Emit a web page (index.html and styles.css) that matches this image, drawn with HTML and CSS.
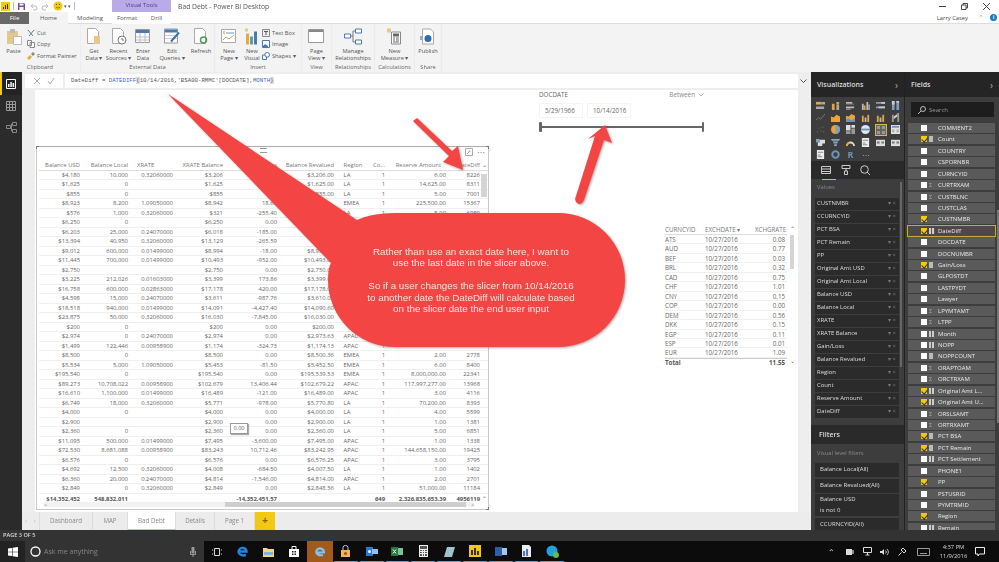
FILE: index.html
```html
<!DOCTYPE html>
<html lang="en">
<head>
<meta charset="utf-8">
<title>Bad Debt - Power BI Desktop</title>
<link rel="stylesheet" href="styles.css">
</head>
<body>
<svg class="defs" width="0" height="0" aria-hidden="true">
  <symbol id="v-sbar" viewBox="0 0 10 10"><path fill="#e8a33d" d="M0 1h6v3H0z"/><path fill="#aaa" d="M6 1h4v3H6zM0 6h9v3H0z"/></symbol>
  <symbol id="v-scol" viewBox="0 0 10 10"><path fill="#e8a33d" d="M1 3h3v7H1zM6 1h3v3H6z"/><path fill="#aaa" d="M6 4h3v6H6z"/></symbol>
  <symbol id="v-cbar" viewBox="0 0 10 10"><path fill="#bbb" d="M0 1h7v2H0zM0 6h9v2H0z"/><path fill="#888" d="M0 3h9v1H0zM0 8h5v2H0z"/></symbol>
  <symbol id="v-ccol" viewBox="0 0 10 10"><path fill="#bbb" d="M1 3h2v7H1zM6 1h2v9H6z"/><path fill="#e8a33d" d="M3 5h2v5H3z"/><path fill="#999" d="M8 4h2v6H8z"/></symbol>
  <symbol id="v-pbar" viewBox="0 0 10 10"><path fill="#7f9fbf" d="M0 1h10v2H0zM0 6h10v2H0z"/><path fill="#ccc" d="M6 1h4v2H6zM3 6h7v2H3z"/></symbol>
  <symbol id="v-pcol" viewBox="0 0 10 10"><path fill="#7f9fbf" d="M1 0h3v10H1zM6 0h3v10H6z"/><path fill="#ccc" d="M1 0h3v4H1zM6 0h3v2H6z"/></symbol>
  <symbol id="v-line" viewBox="0 0 10 10"><path fill="none" stroke="#888" stroke-width=".8" d="M0 8l3-3 2 2 5-6"/></symbol>
  <symbol id="v-area" viewBox="0 0 10 10"><path fill="#e8a33d" d="M0 4l3 1 3-3 4 2v6H0z"/></symbol>
  <symbol id="v-sarea" viewBox="0 0 10 10"><path fill="#e8a33d" d="M0 3l3 1 3-3 4 2v7H0z"/><path fill="#6c93bd" d="M0 7l3-1 3 2 4-2v4H0z"/></symbol>
  <symbol id="v-lcol" viewBox="0 0 10 10"><path fill="#e8a33d" d="M1 3h2v7H1z"/><path fill="#bbb" d="M4 5h2v5H4z"/><path fill="#e8a33d" d="M7 2h2v8H7z"/></symbol>
  <symbol id="v-rib" viewBox="0 0 10 10"><path fill="#999" d="M1 2h2v8H1zM7 0h2v10H7z"/><path fill="#ccc" d="M3 4l4-3v3L3 7z"/></symbol>
  <symbol id="v-scat" viewBox="0 0 10 10"><path fill="#777" d="M1 7h1v1H1zM3 3h1v1H3zM5 6h1v1H5zM7 2h1v1H7zM8 7h1v1H8z"/></symbol>
  <symbol id="v-pie" viewBox="0 0 10 10"><circle cx="5" cy="5" r="5" fill="#e8a33d"/><path fill="#7f9fbf" d="M5 5V0a5 5 0 0 1 0 10z"/></symbol>
  <symbol id="v-tree" viewBox="0 0 10 10"><path fill="#ddd" d="M0 0h5v6H0zM6 0h4v3H6z"/><path fill="#999" d="M6 4h4v6H6zM0 7h5v3H0z"/></symbol>
  <symbol id="v-globe" viewBox="0 0 10 10"><circle cx="5" cy="5" r="5" fill="#dfe6ee"/><path fill="#6c93bd" d="M0 4h10v2H0z"/></symbol>
  <symbol id="v-tab" viewBox="0 0 10 10"><path fill="#666" d="M0 0h10v10H0z"/><path fill="#999" d="M1 1h3v3H1zM6 1h3v3H6zM1 6h3v3H1zM6 6h3v3H6z"/></symbol>
  <symbol id="v-mat" viewBox="0 0 10 10"><path fill="#e4e4e4" d="M0 0h10v10H0z"/><path fill="#6c93bd" d="M1 1h8v2H1z"/><path fill="#999" d="M1 5h3v1H1zM6 5h3v1H6zM1 7h3v1H1zM6 7h3v1H6z"/></symbol>
  <symbol id="v-map" viewBox="0 0 10 10"><path fill="#7f9fbf" d="M0 1h4v4H0z"/><path fill="#ddd" d="M4 2h6v4H4zM2 5h5v4H2z"/></symbol>
  <symbol id="v-fun" viewBox="0 0 10 10"><path fill="#8ca7c4" d="M0 1h10L9 3H1zM2 4h6L7 6H3zM3.500 7h3v2h-3z"/></symbol>
  <symbol id="v-gau" viewBox="0 0 10 10"><path fill="none" stroke="#ddd" stroke-width="2" d="M1 9a4 4 0 0 1 8 0"/><path fill="none" stroke="#e8a33d" stroke-width="2" d="M1 9a4 4 0 0 1 3-4"/></symbol>
  <symbol id="v-card" viewBox="0 0 10 10"><path fill="#eee" d="M1 0h8v10H1z"/><path fill="#888" d="M2 2h6v1H2zM2 5h3v1H2zM2 7h5v1H2z"/></symbol>
  <symbol id="v-kpi" viewBox="0 0 10 10"><path fill="#ddd" d="M0 2h10v7H0z"/><path fill="#777" d="M1 4h3v2H1zM6 4h3v2H6z"/></symbol>
  <symbol id="v-ring" viewBox="0 0 10 10"><circle cx="5" cy="5" r="3.600" fill="none" stroke="#6c93bd" stroke-width="2.200"/></symbol>
</svg>

<div class="app">
  <header class="titlebar">
    <div class="quick">
      <svg class="logo" width="9" height="9" viewBox="0 0 9 9"><path fill="#f2c811" d="M0 0h9v9H0z"/><path fill="#333" d="M2 5h1v2H2zM4 3h1v4H4zM6 2h1v5H6z"/></svg>
      <i class="bar"></i>
      <svg width="9" height="9" viewBox="0 0 9 9"><path fill="#7a4b9c" d="M1 1h6l1 1v6H1z"/><path fill="#fff" d="M2.500 1.500h4v2h-4zM2.500 5h4v3h-4z"/></svg>
      <svg width="9" height="9" viewBox="0 0 9 9"><path fill="none" stroke="#bbb" d="M2 4h4a2 2 0 0 1 0 4H4M4 2L2 4l2 2"/></svg>
      <svg width="9" height="9" viewBox="0 0 9 9"><path fill="none" stroke="#bbb" d="M7 4H3a2 2 0 0 0 0 4h2M5 2l2 2-2 2"/></svg>
      <svg width="10" height="10" viewBox="0 0 10 10"><circle cx="5" cy="5" r="4.500" fill="#f2c811"/><path fill="#555" d="M3 3h1v1H3zM6 3h1v1H6z"/><path fill="none" stroke="#555" stroke-width=".7" d="M3 6c1 1.300 3 1.300 4 0"/></svg>
      <span class="caret">&#9662;</span>
      <span class="caret">&#9662;</span>
      <i class="bar"></i>
    </div>
    <div class="context">Visual Tools</div>
    <div class="doc-title">Bad Debt - Power BI Desktop</div>
    <div class="winctl">
      <svg width="7" height="7" viewBox="0 0 7 7"><path stroke="#444" d="M0 3.500h7"/></svg>
      <svg width="7" height="7" viewBox="0 0 7 7"><path fill="none" stroke="#444" d="M.5 2h4.500v4.500H.5zM2 2V.5h4.500V5H5"/></svg>
      <svg width="7" height="7" viewBox="0 0 7 7"><path stroke="#444" d="M0 0l7 7M7 0L0 7"/></svg>
    </div>
  </header>

  <nav class="menubar">
    <span class="tab file">File</span>
    <span class="tab home">Home</span>
    <span class="tab modeling">Modeling</span>
    <span class="tab ctx format">Format</span>
    <span class="tab ctx drill">Drill</span>
    <span class="user">Larry Casey</span>
    <span class="up">&#8963;</span>
    <span class="info">i</span>
  </nav>

  <section class="ribbon">
    <div class="group g-clip">
      <div class="tools">
        <div class="tool w-paste">
          <svg width="16" height="17" viewBox="0 0 16 17"><path fill="#e7c88a" d="M1 3h11v13H1z"/><path fill="#bbb" d="M4 1h5v4H4z"/><path fill="#fff" stroke="#bbb" d="M7.500 8.500h8v8h-8z"/></svg>
          <span>Paste</span>
        </div>
        <div class="stack">
          <div class="mini"><svg width="8" height="8" viewBox="0 0 8 8"><path fill="none" stroke="#5a7fa8" d="M1 1l5 6M7 1L2 7"/></svg><span>Cut</span></div>
          <div class="mini"><svg width="8" height="8" viewBox="0 0 8 8"><path fill="#fff" stroke="#888" d="M.5.500h4v5h-4zM3 2.500h4.500v5H3z"/></svg><span>Copy</span></div>
          <div class="mini"><svg width="8" height="8" viewBox="0 0 8 8"><path fill="#e7a93d" d="M0 6l3-3 2 2-3 3z"/><path fill="#888" d="M4 2l2-2 2 2-2 2z"/></svg><span>Format Painter</span></div>
        </div>
      </div>
      <div class="glabel">Clipboard</div>
    </div>

    <div class="group g-ext">
      <div class="tools">
        <div class="tool w-get">
          <svg width="16" height="17" viewBox="0 0 16 17"><path fill="#fff" stroke="#aaa" d="M1.500.500h8l3 3v12h-11z"/><path fill="#e7c88a" d="M8 8h6v8H8z"/></svg>
          <span>Get</span><span>Data &#9662;</span>
        </div>
        <div class="tool w-rec">
          <svg width="16" height="17" viewBox="0 0 16 17"><path fill="#fff" stroke="#aaa" d="M1.500.500h8l3 3v12h-11z"/><circle cx="11" cy="12" r="4" fill="#fff" stroke="#777"/><path stroke="#777" fill="none" d="M11 10v2h2"/></svg>
          <span>Recent</span><span>Sources &#9662;</span>
        </div>
        <div class="tool w-ent">
          <svg width="16" height="15" viewBox="0 0 16 15"><path fill="#fff" stroke="#999" d="M.5.500h14v13H.5z"/><path fill="#4a78b0" d="M1 1h13v3H1z"/><path stroke="#bbb" d="M1 8h13M1 11h13M5 4v10M10 4v10"/></svg>
          <span>Enter</span><span>Data</span>
        </div>
        <div class="tool w-edit">
          <svg width="17" height="16" viewBox="0 0 17 16"><path fill="#fff" stroke="#999" d="M.5.500h13v14H.5z"/><path fill="#4a78b0" d="M1 1h12v3H1z"/><path stroke="#ccc" d="M1 7h12M1 10h12"/><path stroke="#3f6ea8" stroke-width="2" d="M7 13l8-9"/></svg>
          <span>Edit</span><span>Queries &#9662;</span>
        </div>
        <div class="tool w-ref">
          <svg width="16" height="17" viewBox="0 0 16 17"><path fill="#fff" stroke="#aaa" d="M1.500.500h8l3 3v12h-11z"/><circle cx="10.500" cy="12" r="3" fill="none" stroke="#4d9a5d" stroke-width="1.500"/></svg>
          <span>Refresh</span>
        </div>
      </div>
      <div class="glabel">External Data</div>
    </div>

    <div class="group g-ins">
      <div class="tools">
        <div class="tool w-np">
          <svg width="16" height="15" viewBox="0 0 16 15"><path fill="#fff" stroke="#aaa" d="M.5.500h14v13H.5z"/><path fill="#e7c88a" d="M2 2h2v3H2z"/><path stroke="#6c93bd" d="M5 4h8"/><path fill="none" stroke="#c96" d="M2 11l3-3 3 2 5-4"/></svg>
          <span>New</span><span>Page &#9662;</span>
        </div>
        <div class="tool w-nv">
          <svg width="15" height="16" viewBox="0 0 15 16"><path fill="#e7a93d" d="M1 5h3v11H1z"/><path fill="#5f9ea0" d="M5 8h3v8H5z"/><path fill="#4a78b0" d="M9 3h3v13H9z"/><path fill="#e7c88a" d="M0 0h3v3H0z"/></svg>
          <span>New</span><span>Visual</span>
        </div>
        <div class="stack">
          <div class="mini"><svg width="8" height="8" viewBox="0 0 8 8"><path fill="#eee" stroke="#888" d="M.5.500h7v7h-7z"/><path stroke="#555" d="M2 2.500h4M4 2.500V6"/></svg><span>Text Box</span></div>
          <div class="mini"><svg width="8" height="8" viewBox="0 0 8 8"><path fill="#fff" stroke="#4a78b0" d="M.5.500h7v7h-7z"/><path fill="#4a78b0" d="M1 6l2-2 3 2v1H1z"/></svg><span>Image</span></div>
          <div class="mini"><svg width="8" height="8" viewBox="0 0 8 8"><path fill="#fff" stroke="#4a78b0" d="M.5 3h4v4.500h-4z"/><circle cx="5.200" cy="2.800" r="2.300" fill="#fff" stroke="#4a78b0"/></svg><span>Shapes &#9662;</span></div>
        </div>
      </div>
      <div class="glabel">Insert</div>
    </div>

    <div class="group g-view">
      <div class="tools">
        <div class="tool w-fill">
          <svg width="17" height="15" viewBox="0 0 17 15"><path fill="#fff" stroke="#999" d="M.5.500h15v13H.5z"/><path fill="#888" d="M1 1h14v2H1z"/></svg>
          <span>Page</span><span>View &#9662;</span>
        </div>
      </div>
      <div class="glabel">View</div>
    </div>

    <div class="group g-rel">
      <div class="tools">
        <div class="tool w-fill">
          <svg width="18" height="16" viewBox="0 0 18 16"><path fill="#fff" stroke="#4a78b0" d="M.5 5.500h6v4h-6zM11.500.500h6v4h-6zM11.500 11.500h6v4h-6z"/><path fill="none" stroke="#777" d="M6.500 7.500H9V2.500h2.500M9 7.500v6h2.500"/></svg>
          <span>Manage</span><span>Relationships</span>
        </div>
      </div>
      <div class="glabel">Relationships</div>
    </div>

    <div class="group g-calc">
      <div class="tools">
        <div class="tool w-fill">
          <svg width="16" height="16" viewBox="0 0 16 16"><path fill="#e7c88a" d="M0 0h4v4H0z"/><path fill="#fff" stroke="#888" d="M4.500 3.500h9v12h-9z"/><path fill="#666" d="M6 5h6v3H6zM6 9h2v1H6zM9 9h3v1H9zM6 11h2v1H6zM9 11h3v1H9zM6 13h6v1H6z"/></svg>
          <span>New</span><span>Measure &#9662;</span>
        </div>
      </div>
      <div class="glabel">Calculations</div>
    </div>

    <div class="group g-share">
      <div class="tools">
        <div class="tool w-fill">
          <svg width="16" height="16" viewBox="0 0 16 16"><path fill="#fff" stroke="#aaa" d="M2.500.500h8l3 3v12h-11z"/><circle cx="8" cy="10" r="3.500" fill="#2f6db0"/><path fill="#2f6db0" d="M0 8h2v1H0zM0 10h2v1H0z"/></svg>
          <span>Publish</span>
        </div>
      </div>
      <div class="glabel">Share</div>
    </div>
  </section>

  <div class="work">
    <aside class="sidenav">
      <div class="nav-item active">
        <svg width="10" height="10" viewBox="0 0 10 10"><path fill="none" stroke="#fff" d="M.5.500h9v9h-9z"/><path fill="#fff" d="M2 5h1.500v3H2zM4.300 3h1.500v5H4.300zM6.600 4h1.500v4H6.600z"/></svg>
      </div>
      <div class="nav-item">
        <svg width="10" height="10" viewBox="0 0 10 10"><path fill="none" stroke="#999" d="M.5.500h9v9h-9zM.5 3.500h9M.5 6.500h9M3.500.5v9M6.500.5v9"/></svg>
      </div>
      <div class="nav-item">
        <svg width="11" height="11" viewBox="0 0 11 11"><path fill="none" stroke="#888" d="M.5 3.500h4v3h-4zM6.500.5h4v3h-4zM6.500 7.500h4v3h-4zM4.500 5H5.500V2h1M5.500 5v4h1"/></svg>
      </div>
    </aside>

    <main class="center">
      <div class="formula">
        <div class="fx-btns">
          <svg width="8" height="8" viewBox="0 0 8 8"><path stroke="#aaa" d="M1 1l6 6M7 1L1 7"/></svg>
          <svg width="8" height="8" viewBox="0 0 8 8"><path fill="none" stroke="#aaa" d="M1 4l2 3 4-6"/></svg>
        </div>
        <div class="fx-input">DateDiff = <b>DATEDIFF</b><em>(</em>10/14/2016,'BSA00-RMMC'[DOCDATE],<b>MONTH</b><em>)</em></div>
        <svg class="fx-chev" width="7" height="5" viewBox="0 0 7 5"><path fill="none" stroke="#555" d="M.5.500l3 3 3-3"/></svg>
      </div>

      <div class="canvas-wrap">
        <div class="canvas">

          <section class="visual v-table">
            <i class="corner c-tl"></i><i class="corner c-tr"></i><i class="corner c-br"></i>
            <i class="grip"></i>
            <div class="v-tools">
              <svg width="8" height="8" viewBox="0 0 8 8"><path fill="none" stroke="#aaa" d="M.5.500h7v7h-7zM2 6l3-3M3.500 3H5v1.500"/></svg>
              <span>&#8943;</span>
            </div>
            <div class="row head"><span>Balance USD</span><span>Balance Local</span><span class="l">XRATE</span><span>XRATE Balance</span><span>Gain/Loss</span><span>Balance Revalued</span><span class="l reg">Region</span><span>Co...</span><span class="rsv">Reserve Amount</span><span>DateDiff</span></div>
            <div class="row"><span>$4,180</span><span>10,000</span><span>0.32060000</span><span>$3,206</span><span></span><span>$3,206.00</span><span class="l reg">LA</span><span>1</span><span>6.00</span><span>8226</span></div>
            <div class="row"><span>$1,625</span><span>0</span><span></span><span>$1,625</span><span></span><span>$1,625.00</span><span class="l reg">LA</span><span>1</span><span>14,625.00</span><span>8311</span></div>
            <div class="row"><span>$855</span><span>0</span><span></span><span>$855</span><span></span><span>$855.00</span><span class="l reg">LA</span><span>1</span><span>5.00</span><span>7001</span></div>
            <div class="row"><span>$8,923</span><span>8,200</span><span>1.09050000</span><span>$8,942</span><span>18.63</span><span></span><span class="l reg">EMEA</span><span>1</span><span>225,500.00</span><span>15367</span></div>
            <div class="row"><span>$576</span><span>1,000</span><span>0.32060000</span><span>$321</span><span>-255.40</span><span></span><span class="l reg">LA</span><span>1</span><span>5.00</span><span>6989</span></div>
            <div class="row"><span>$6,250</span><span>0</span><span></span><span>$6,250</span><span>0.00</span><span></span><span></span><span></span><span></span><span></span></div>
            <div class="row"><span>$6,203</span><span>25,000</span><span>0.24070000</span><span>$6,018</span><span>-185.00</span><span></span><span></span><span></span><span></span><span></span></div>
            <div class="row"><span>$13,394</span><span>40,950</span><span>0.32060000</span><span>$13,129</span><span>-265.59</span><span></span><span></span><span></span><span></span><span></span></div>
            <div class="row"><span>$9,012</span><span>600,000</span><span>0.01499000</span><span>$8,994</span><span>-18.00</span><span>$8,994.00</span><span></span><span></span><span></span><span></span></div>
            <div class="row"><span>$11,445</span><span>700,000</span><span>0.01499000</span><span>$10,493</span><span>-952.00</span><span>$10,493.00</span><span></span><span></span><span></span><span></span></div>
            <div class="row"><span>$2,750</span><span></span><span></span><span>$2,750</span><span>0.00</span><span>$2,750.00</span><span></span><span></span><span></span><span></span></div>
            <div class="row"><span>$3,225</span><span>212,026</span><span>0.01603000</span><span>$3,399</span><span>173.86</span><span>$3,399.00</span><span></span><span></span><span></span><span></span></div>
            <div class="row"><span>$16,758</span><span>600,000</span><span>0.02863000</span><span>$17,178</span><span>420.00</span><span>$17,178.00</span><span></span><span></span><span></span><span></span></div>
            <div class="row"><span>$4,598</span><span>15,000</span><span>0.24070000</span><span>$3,611</span><span>-987.76</span><span>$3,610.00</span><span></span><span></span><span></span><span></span></div>
            <div class="row"><span>$18,518</span><span>940,000</span><span>0.01499000</span><span>$14,091</span><span>-4,427.40</span><span>$14,090.60</span><span></span><span></span><span></span><span></span></div>
            <div class="row"><span>$23,875</span><span>50,000</span><span>0.32060000</span><span>$16,030</span><span>-7,845.00</span><span>$16,030.00</span><span></span><span></span><span></span><span></span></div>
            <div class="row"><span>$200</span><span>0</span><span></span><span>$200</span><span>0.00</span><span>$200.00</span><span></span><span></span><span></span><span></span></div>
            <div class="row"><span>$2,974</span><span>0</span><span>0.24070000</span><span>$2,974</span><span>0.00</span><span>$2,973.63</span><span class="l reg">APAC</span><span></span><span></span><span></span></div>
            <div class="row"><span>$1,499</span><span>122,446</span><span>0.00958900</span><span>$1,174</span><span>-324.73</span><span>$1,174.13</span><span class="l reg">APAC</span><span>1</span><span></span><span></span></div>
            <div class="row"><span>$8,500</span><span>0</span><span></span><span>$8,500</span><span>0.00</span><span>$8,500.36</span><span class="l reg">EMEA</span><span>1</span><span>2.00</span><span>2778</span></div>
            <div class="row"><span>$5,534</span><span>5,000</span><span>1.09050000</span><span>$5,453</span><span>-81.50</span><span>$5,452.50</span><span class="l reg">EMEA</span><span>1</span><span>6.00</span><span>8400</span></div>
            <div class="row"><span>$195,540</span><span>0</span><span></span><span>$195,540</span><span>0.00</span><span>$195,539.53</span><span class="l reg">EMEA</span><span>1</span><span>8,000,000.00</span><span>22341</span></div>
            <div class="row"><span>$89,273</span><span>10,708,022</span><span>0.00958900</span><span>$102,679</span><span>13,406.44</span><span>$102,679.22</span><span class="l reg">APAC</span><span>1</span><span>117,997,277.00</span><span>13968</span></div>
            <div class="row"><span>$16,610</span><span>1,100,000</span><span>0.01499000</span><span>$16,489</span><span>-121.00</span><span>$16,489.00</span><span class="l reg">APAC</span><span>1</span><span>3.00</span><span>4116</span></div>
            <div class="row"><span>$6,749</span><span>18,000</span><span>0.32060000</span><span>$5,771</span><span>-978.00</span><span>$5,770.80</span><span class="l reg">LA</span><span>1</span><span>70,200.00</span><span>8393</span></div>
            <div class="row"><span>$4,000</span><span>0</span><span></span><span>$4,000</span><span>0.00</span><span>$4,000.00</span><span class="l reg">LA</span><span>1</span><span>4.00</span><span>5599</span></div>
            <div class="row"><span>$2,900</span><span></span><span></span><span>$2,900</span><span>0.00</span><span>$2,900.00</span><span class="l reg">LA</span><span>1</span><span>1.00</span><span>1381</span></div>
            <div class="row"><span>$2,360</span><span>0</span><span></span><span>$2,360</span><span>0.00</span><span>$2,360.00</span><span class="l reg">LA</span><span>1</span><span>5.00</span><span>6851</span></div>
            <div class="row"><span>$11,095</span><span>500,000</span><span>0.01499000</span><span>$7,495</span><span>-3,600.00</span><span>$7,495.00</span><span class="l reg">APAC</span><span>1</span><span>1.00</span><span>1338</span></div>
            <div class="row"><span>$72,530</span><span>8,681,088</span><span>0.00958900</span><span>$83,243</span><span>10,712.46</span><span>$83,242.95</span><span class="l reg">APAC</span><span>1</span><span>144,658,150.00</span><span>19425</span></div>
            <div class="row"><span>$6,576</span><span>0</span><span></span><span>$6,576</span><span>0.00</span><span>$6,576.25</span><span class="l reg">APAC</span><span>1</span><span>3.00</span><span>3795</span></div>
            <div class="row"><span>$4,692</span><span>12,500</span><span>0.32060000</span><span>$4,008</span><span>-684.50</span><span>$4,007.50</span><span class="l reg">LA</span><span>1</span><span>1.00</span><span>1402</span></div>
            <div class="row"><span>$6,360</span><span>20,000</span><span>0.24070000</span><span>$4,814</span><span>-1,546.00</span><span>$4,814.00</span><span class="l reg">APAC</span><span>1</span><span>2.00</span><span>2701</span></div>
            <div class="row"><span>$2,849</span><span>0</span><span>0.32060000</span><span>$2,849</span><span>0.00</span><span>$2,848.56</span><span class="l reg">LA</span><span>1</span><span>51,000.00</span><span>11184</span></div>
            <div class="row total"><span>$14,352,452</span><span>548,832,011</span><span></span><span></span><span>-14,352,451.57</span><span></span><span></span><span>649</span><span>2,326,835,653.39</span><span>4956119</span></div>
            <div class="hscroll"><span>&lt;</span><i></i><span>&gt;</span></div>
            <div class="vscroll"><span>&#8963;</span><i></i><span class="dn">&#8964;</span></div>
          </section>

          <div class="tip">0.00</div>

          <section class="visual v-slicer">
            <div class="sl-head"><span>DOCDATE</span><span class="sl-mode">Between <svg width="6" height="4" viewBox="0 0 6 4"><path fill="none" stroke="#999" stroke-width=".7" d="M.5.500l2.500 2.500 2.500-2.500"/></svg></span></div>
            <div class="sl-dates"><span>5/29/1966</span><span>10/14/2016</span></div>
            <div class="sl-track"></div>
          </section>

          <section class="visual v-rates">
            <div class="r-row r-head"><span>CURNCYID</span><span>EXCHDATE &#9662;</span><span>XCHGRATE</span></div>
            <div class="r-row"><span>ATS</span><span>10/27/2016</span><span>0.08</span></div>
            <div class="r-row"><span>AUD</span><span>10/27/2016</span><span>0.77</span></div>
            <div class="r-row"><span>BEF</span><span>10/27/2016</span><span>0.03</span></div>
            <div class="r-row"><span>BRL</span><span>10/27/2016</span><span>0.32</span></div>
            <div class="r-row"><span>CAD</span><span>10/27/2016</span><span>0.75</span></div>
            <div class="r-row"><span>CHF</span><span>10/27/2016</span><span>1.01</span></div>
            <div class="r-row"><span>CNY</span><span>10/27/2016</span><span>0.15</span></div>
            <div class="r-row"><span>COP</span><span>10/27/2016</span><span>0.00</span></div>
            <div class="r-row"><span>DEM</span><span>10/27/2016</span><span>0.56</span></div>
            <div class="r-row"><span>DKK</span><span>10/27/2016</span><span>0.15</span></div>
            <div class="r-row"><span>EGP</span><span>10/27/2016</span><span>0.11</span></div>
            <div class="r-row"><span>ESP</span><span>10/27/2016</span><span>0.01</span></div>
            <div class="r-row"><span>EUR</span><span>10/27/2016</span><span>1.09</span></div>
            <div class="r-row r-total"><span>Total</span><span></span><span>11.55</span></div>
            <div class="r-scroll"><span>&#8963;</span><i></i><span class="dn">&#8964;</span></div>
          </section>
        </div>
      </div>

      <div class="pagetabs">
        <div class="pt-nav"><span>&#8249;</span><span>&#8250;</span></div>
        <span class="pt w-dash">Dashboard</span>
        <span class="pt w-map">MAP</span>
        <span class="pt w-bad active">Bad Debt</span>
        <span class="pt w-det">Details</span>
        <span class="pt w-p1">Page 1</span>
        <span class="pt-add">+</span>
      </div>
    </main>

    <aside class="viz">
      <h2 class="pane-head"><span>Visualizations</span><span class="chev">&#8250;</span></h2>
      <div class="viz-grid">
        <svg><use href="#v-sbar"/></svg><svg><use href="#v-scol"/></svg><svg><use href="#v-cbar"/></svg><svg><use href="#v-ccol"/></svg><svg><use href="#v-pbar"/></svg><svg><use href="#v-pcol"/></svg>
        <svg><use href="#v-line"/></svg><svg><use href="#v-area"/></svg><svg><use href="#v-sarea"/></svg><svg><use href="#v-lcol"/></svg><svg><use href="#v-lcol"/></svg><svg><use href="#v-rib"/></svg>
        <svg><use href="#v-scat"/></svg><svg><use href="#v-pie"/></svg><svg><use href="#v-tree"/></svg><svg><use href="#v-globe"/></svg><svg class="sel"><use href="#v-tab"/></svg><svg><use href="#v-mat"/></svg>
        <svg><use href="#v-map"/></svg><svg><use href="#v-fun"/></svg><svg><use href="#v-gau"/></svg><svg><use href="#v-card"/></svg><svg><use href="#v-kpi"/></svg><svg><use href="#v-kpi"/></svg>
        <svg><use href="#v-card"/></svg><svg><use href="#v-ring"/></svg><span class="r-ico">R</span><span class="more">&#8943;</span>
      </div>
      <div class="viz-tabs">
        <svg class="on" width="10" height="10" viewBox="0 0 10 10"><path fill="none" stroke="#ccc" d="M.5 1.500h9v7h-9zM.5 4h9M.5 6.500h9"/></svg>
        <svg width="10" height="10" viewBox="0 0 10 10"><path fill="none" stroke="#ccc" d="M1 .5h8v3H1zM5 3.500V6M3.500 6h3v3.500h-3z"/></svg>
        <svg width="10" height="10" viewBox="0 0 10 10"><circle cx="4.500" cy="4.500" r="3.800" fill="none" stroke="#ccc"/><path stroke="#ccc" d="M7 7l3 3"/></svg>
      </div>
      <div class="pane-label">Values</div>
      <ul class="wells">
        <li><span>CUSTNMBR</span><i>&#9662; &#215;</i></li>
        <li><span>CCURNCYID</span><i>&#9662; &#215;</i></li>
        <li><span>PCT BSA</span><i>&#9662; &#215;</i></li>
        <li><span>PCT Remain</span><i>&#9662; &#215;</i></li>
        <li><span>PP</span><i>&#9662; &#215;</i></li>
        <li><span>Original Amt USD</span><i>&#9662; &#215;</i></li>
        <li><span>Original Amt Local</span><i>&#9662; &#215;</i></li>
        <li><span>Balance USD</span><i>&#9662; &#215;</i></li>
        <li><span>Balance Local</span><i>&#9662; &#215;</i></li>
        <li><span>XRATE</span><i>&#9662; &#215;</i></li>
        <li><span>XRATE Balance</span><i>&#9662; &#215;</i></li>
        <li><span>Gain/Loss</span><i>&#9662; &#215;</i></li>
        <li><span>Balance Revalued</span><i>&#9662; &#215;</i></li>
        <li><span>Region</span><i>&#9662; &#215;</i></li>
        <li><span>Count</span><i>&#9662; &#215;</i></li>
        <li><span>Reserve Amount</span><i>&#9662; &#215;</i></li>
        <li><span>DateDiff</span><i>&#9662; &#215;</i></li>
      </ul>
      <h3 class="filters-head">Filters</h3>
      <div class="pane-label fl">Visual level filters</div>
      <ul class="filters">
        <li>Balance Local(All)</li>
        <li>Balance Revalued(All)</li>
        <li class="two">Balance USD<br>is not 0</li>
        <li>CCURNCYID(All)</li>
      </ul>
      <i class="viz-scroll"></i>
    </aside>

    <aside class="fields">
      <h2 class="pane-head"><span>Fields</span><span class="chev">&#8250;</span></h2>
      <div class="search">
        <svg width="8" height="8" viewBox="0 0 8 8"><circle cx="5" cy="3" r="2.500" fill="none" stroke="#bbb"/><path stroke="#bbb" d="M3 5L0 8"/></svg>
        <span>Search</span>
      </div>
      <ul class="flist">
        <li><b class="cb"></b><i class="fi"></i>COMMENT2</li>
        <li><b class="cb on"></b><i class="fi calc"></i>Count</li>
        <li><b class="cb"></b><i class="fi"></i>COUNTRY</li>
        <li><b class="cb"></b><i class="fi"></i>CSPORNBR</li>
        <li><b class="cb"></b><i class="fi"></i>CURNCYID</li>
        <li><b class="cb"></b><i class="fi sig">&#931;</i>CURTRXAM</li>
        <li><b class="cb"></b><i class="fi sig">&#931;</i>CUSTBLNC</li>
        <li><b class="cb"></b><i class="fi"></i>CUSTCLAS</li>
        <li><b class="cb on"></b><i class="fi"></i>CUSTNMBR</li>
        <li class="sel"><b class="cb on"></b><i class="fi col"></i>DateDiff</li>
        <li><b class="cb"></b><i class="fi"></i>DOCDATE</li>
        <li><b class="cb"></b><i class="fi"></i>DOCNUMBR</li>
        <li><b class="cb on"></b><i class="fi calc"></i>Gain/Loss</li>
        <li><b class="cb"></b><i class="fi"></i>GLPOSTDT</li>
        <li><b class="cb"></b><i class="fi"></i>LASTPYDT</li>
        <li><b class="cb"></b><i class="fi"></i>Lawyer</li>
        <li><b class="cb"></b><i class="fi sig">&#931;</i>LPYMTAMT</li>
        <li><b class="cb"></b><i class="fi sig">&#931;</i>LTPP</li>
        <li><b class="cb"></b><i class="fi col"></i>Month</li>
        <li><b class="cb"></b><i class="fi col"></i>NOPP</li>
        <li><b class="cb"></b><i class="fi calc"></i>NOPPCOUNT</li>
        <li><b class="cb"></b><i class="fi sig">&#931;</i>ORAPTOAM</li>
        <li><b class="cb"></b><i class="fi sig">&#931;</i>ORCTRXAM</li>
        <li><b class="cb on"></b><i class="fi col"></i>Original Amt L...</li>
        <li><b class="cb on"></b><i class="fi col"></i>Original Amt U...</li>
        <li><b class="cb"></b><i class="fi sig">&#931;</i>ORSLSAMT</li>
        <li><b class="cb"></b><i class="fi sig">&#931;</i>ORTRXAMT</li>
        <li><b class="cb on"></b><i class="fi calc"></i>PCT BSA</li>
        <li><b class="cb on"></b><i class="fi calc"></i>PCT Remain</li>
        <li><b class="cb"></b><i class="fi col"></i>PCT Settlement</li>
        <li><b class="cb"></b><i class="fi"></i>PHONE1</li>
        <li><b class="cb on"></b><i class="fi"></i>PP</li>
        <li><b class="cb"></b><i class="fi"></i>PSTUSRID</li>
        <li><b class="cb"></b><i class="fi"></i>PYMTRMID</li>
        <li><b class="cb on"></b><i class="fi"></i>Region</li>
        <li><b class="cb"></b><i class="fi col"></i>Remain</li>
      </ul>
      <i class="fields-scroll"></i>
    </aside>
  </div>

  <div class="status">PAGE 3 OF 5</div>

  <footer class="taskbar">
    <div class="start"><svg width="10" height="10" viewBox="0 0 10 10"><path fill="#fff" d="M0 1.500l4-.6V4.700H0zM4.600.800L10 0v4.700H4.600zM0 5.300h4v3.800l-4-.6zM4.600 5.300H10V10l-5.400-.8z"/></svg></div>
    <div class="cortana">
      <svg width="11" height="11" viewBox="0 0 11 11"><circle cx="5.500" cy="5.500" r="4.500" fill="none" stroke="#fff" stroke-width="1.300"/></svg>
      <span>Ask me anything</span>
      <svg class="mic" width="6" height="10" viewBox="0 0 6 10"><path fill="#999" d="M1.500 0h3v6.500h-3z"/><path fill="none" stroke="#999" d="M.5 4v3.500h5V4M3 7.500V10"/></svg>
    </div>
    <div class="apps">
      <span class="app-btn"><svg width="10" height="8" viewBox="0 0 10 8"><path fill="none" stroke="#ddd" d="M2.500.5h5v7h-5zM0 2h1M9 2h1M0 6h1M9 6h1"/></svg></span>
      <span class="app-btn"><svg width="11" height="11" viewBox="0 0 11 11"><path fill="none" stroke="#1e86e0" stroke-width="2.400" d="M1.500 5.500h8A4 4 0 0 0 2 4c-1.500 3.500 2 6.500 7 5"/></svg></span>
      <span class="app-btn"><svg width="11" height="10" viewBox="0 0 11 10"><path fill="#f5d77a" d="M0 1h4l1 1h6v8H0z"/><path fill="#7cb6dc" d="M1 5h9v3H1z"/></svg></span>
      <span class="app-btn"><svg width="10" height="11" viewBox="0 0 10 11"><path fill="#fff" d="M0 3h10v8H0z"/><path fill="none" stroke="#fff" d="M3 3V.5h4V3"/><path fill="#222" d="M3 5h1.500v1.500H3zM5.500 5H7v1.500H5.500zM3 7.500h1.500V9H3zM5.500 7.500H7V9H5.500z"/></svg></span>
      <span class="app-btn ie"><svg width="12" height="12" viewBox="0 0 12 12"><path fill="none" stroke="#7ec4ee" stroke-width="2.200" d="M2 6.500h8A4 4 0 0 0 2.500 4.500c-1 3 2 5.500 6.500 4.500"/></svg></span>
      <span class="app-btn run"><svg width="9" height="12" viewBox="0 0 9 12"><path fill="#e8b75a" d="M0 5h9v7H0z"/><path fill="none" stroke="#ccc" d="M2 5V2.500a2.500 2 0 0 1 5 0V5"/><circle cx="4.500" cy="8.500" r="1.500" fill="#c0392b"/></svg></span>
      <span class="app-btn run"><svg width="12" height="11" viewBox="0 0 12 11"><path fill="#2a7cc8" d="M0 1h7v9H0z"/><path fill="#8fc1ea" d="M6 3h6v5H6z"/><circle cx="3.500" cy="5.500" r="1.500" fill="#fff"/></svg></span>
      <span class="app-btn run"><svg width="12" height="11" viewBox="0 0 12 11"><path fill="#1e7a3e" d="M0 1h7v9H0z"/><path fill="#7dc09a" d="M7 2h5v7H7z"/><path stroke="#fff" d="M2 3.500l3 4M5 3.500l-3 4"/></svg></span>
      <span class="app-btn run"><svg width="9" height="12" viewBox="0 0 9 12"><path fill="#eee" d="M0 0h9v12H0z"/><path fill="#555" d="M1 1h7v3H1zM1 5h2v1H1zM4 5h1v1H4zM6 5h2v1H6zM1 7h2v1H1zM4 7h1v1H4zM6 7h2v1H6zM1 9h2v2H1zM4 9h1v2H4zM6 9h2v2H6z"/></svg></span>
      <span class="app-btn run"><svg width="11" height="11" viewBox="0 0 11 11"><path fill="#9fc3cf" d="M3 1h8L8 11H0z"/></svg></span>
      <span class="app-btn run"><svg width="12" height="12" viewBox="0 0 12 12"><path fill="#f2c811" d="M0 0h12v12H0z"/><path fill="#333" d="M2 5h2v5H2zM5 3h2v7H5zM8 6h2v4H8z"/></svg></span>
      <span class="app-btn run"><svg width="12" height="11" viewBox="0 0 12 11"><path fill="#2b5fa8" d="M0 1h7v9H0z"/><path fill="#a8c4e6" d="M7 2h5v7H7z"/></svg></span>
      <span class="app-btn run"><svg width="12" height="12" viewBox="0 0 12 12"><path fill="#e9edf2" d="M2 0h7l2 2v10H2z"/><path fill="#4a78b0" d="M3 6h2v5H3zM6 4h2v7H6z"/></svg></span>
      <span class="app-btn run"><svg width="13" height="13" viewBox="0 0 13 13"><circle cx="6" cy="6" r="5.500" fill="#1fa3dc"/><circle cx="10" cy="10" r="3" fill="#6bb94a"/></svg></span>
    </div>
    <div class="tray">
      <span class="t-up">&#8963;</span>
      <svg width="8" height="7" viewBox="0 0 8 7"><path fill="#ddd" d="M0 1h6v6H0z"/><path fill="#888" d="M6 2h2v4H6z"/></svg>
      <svg width="9" height="9" viewBox="0 0 9 9"><path fill="none" stroke="#ddd" d="M.5.500h8v5h-8zM4.500 5.500V8M2.500 8h4"/></svg>
      <svg width="9" height="8" viewBox="0 0 9 8"><path fill="#ddd" d="M0 3h2l2-2v6L2 5H0z"/><path fill="none" stroke="#bbb" d="M5.500 2.500a2 2 0 0 1 0 3M7 1a4 4 0 0 1 0 6"/></svg>
      <svg width="9" height="9" viewBox="0 0 9 9"><path fill="none" stroke="#ddd" d="M.5 8.500l3-3M3 3l3 3M5 1l3 3-2 2-3-3z"/></svg>
      <svg class="kbd" width="13" height="8" viewBox="0 0 13 8"><path fill="none" stroke="#999" d="M.5.500h12v7H.5z"/><path stroke="#999" d="M3 5.500h7"/></svg>
      <div class="clock"><span>4:37 PM</span><span>11/9/2016</span></div>
      <svg class="notif" width="10" height="10" viewBox="0 0 10 10"><path fill="none" stroke="#eee" d="M.5.500h9v6.500H4.500L3 9V7H.5z"/></svg>
    </div>
  </footer>

  <div class="annotation">
    <svg class="ann-shapes" width="999" height="562" viewBox="0 0 999 562">
      <path fill="#f44545" d="M168 94L357 220Q372 213 395 213H558A67 67 0 0 1 558 347H395A67 67 0 0 1 328 280Q328 268 331 263Z"/>
      <path fill="#f44545" d="M413 121L417 118L452 151L458 146L463 170L443 162L449 156Z"/>
      <path fill="#f44545" d="M605 125L612 143L604 140L584 200Q581 206 577 203Q574 200 576 196L595 136L588 139Z"/>
    </svg>
    <div class="callout">
      <p>Rather than use an exact date here, I want to<br>use the last date in the slicer above.</p>
      <p>So if a user changes the slicer from 10/14/2016<br>to another date the DateDiff will calculate based<br>on the slicer date the end user input</p>
    </div>
  </div>
</div>
</body>
</html>
```

FILE: styles.css
```css
* { box-sizing: border-box; }
html, body { margin: 0; padding: 0; }
body { width: 999px; height: 562px; overflow: hidden; background: #fff; font-family: "Open Sans", "Noto Sans", sans-serif; font-size: 6px; color: #666; }
ul { list-style: none; margin: 0; padding: 0; }
h2, h3, p { margin: 0; }
i, em { font-style: normal; }
.defs { position: absolute; }

.app { position: relative; width: 999px; height: 562px; display: flex; flex-direction: column; filter: blur(.45px); }

/* title bar */
.titlebar { height: 12px; display: flex; align-items: center; background: #fff; position: relative; }
.quick { width: 112px; display: flex; align-items: center; gap: 3px; padding-left: 1px; }
.quick .bar { width: 1px; height: 8px; background: #bbb; }
.caret { font-size: 5px; color: #555; margin-left: -2px; }
.context { width: 59px; height: 12px; background: #b9aae8; color: #4d3f80; text-align: center; font-size: 5.800px; line-height: 11px; }
.doc-title { margin-left: 7px; font-size: 6.800px; color: #555; }
.winctl { margin-left: auto; width: 60px; display: flex; justify-content: space-between; padding-right: 9px; padding-left: 0; }

.menubar { height: 12px; background: #fff; position: relative; display: flex; align-items: center; border-bottom: 1px solid #ddd; font-size: 6px; color: #555; }
.tab { height: 12px; line-height: 12px; text-align: center; }
.tab.file { width: 29px; background: #686868; color: #fff; }
.tab.home { width: 39px; background: #f3f3f3; position: relative; z-index: 1; }
.tab.modeling { width: 44px; }
.tab.ctx { background: #fff; }
.tab.format { width: 30px; }
.tab.drill { width: 29px; }
.user { margin-left: auto; font-size: 5.800px; color: #444; margin-right: 10px; }
.up { color: #aaa; font-size: 7px; margin-right: 6px; line-height: 7px; }
.info { width: 7px; height: 7px; border-radius: 50%; background: #1a78c8; color: #fff; font-size: 5px; line-height: 7px; text-align: center; font-weight: 700; margin-right: 2px; }

/* ribbon */
.ribbon { height: 48px; background: #f3f3f3; display: flex; color: #555; }
.group { display: flex; flex-direction: column; border-right: 1px solid #ececec; }
.tools { flex: 1; display: flex; padding-top: 4px; }
.glabel { height: 10px; line-height: 11px; text-align: center; font-size: 5.800px; color: #666; }
.g-clip { width: 81px; }
.g-ext { width: 134px; }
.g-ins { width: 87px; }
.g-view { width: 30px; }
.g-rel { width: 43px; }
.g-calc { width: 40px; }
.g-share { width: 27px; }
.tool { display: flex; flex-direction: column; align-items: center; line-height: 7px; font-size: 5.700px; white-space: nowrap; }
.tool svg { height: 17px; margin-bottom: 3px; }
.w-paste { width: 27px; }
.w-get { width: 26px; }
.w-rec { width: 23px; }
.w-ent { width: 26px; }
.w-edit { width: 32px; }
.w-ref { width: 26px; }
.w-np { width: 26px; margin-left: 1px; }
.w-nv { width: 20px; }
.w-fill { flex: 1; }
.stack { display: flex; flex-direction: column; gap: 3.700px; padding-top: .5px; }
.mini { display: flex; align-items: center; gap: 2px; height: 8px; font-size: 5.700px; white-space: nowrap; }

/* work area */
.work { height: 458px; display: flex; }
.sidenav { width: 22px; background: #2b2b2b; display: flex; flex-direction: column; }
.nav-item { height: 21.500px; display: flex; align-items: center; justify-content: center; }
.nav-item.active { height: 23px; border-left: 2px solid #f2c811; padding-right: 2px; background: #242424; }

.center { width: 789px; display: flex; flex-direction: column; background: #eee; }
.formula { height: 18px; display: flex; align-items: center; padding-left: 3px; background: #eee; }
.fx-btns { width: 38px; height: 14px; background: #fff; display: flex; align-items: center; justify-content: space-around; padding: 0 5px; }
.fx-input { width: 733px; height: 14px; margin-left: 2px; background: #fff; font-family: "Liberation Mono", monospace; font-size: 5.720px; line-height: 14px; padding-left: 6px; color: #555; white-space: pre; }
.fx-input b { font-weight: 400; color: #3a68c4; }
.fx-input em { background: #ddd; }
.fx-chev { margin-left: 2px; }

.canvas-wrap { flex: 1; padding: 0 13px 0 13px; background: #eee; }
.canvas { position: relative; height: 100%; background: #fff; }

.visual { position: absolute; }

/* main table */
.v-table { left: 1px; top: 56px; width: 453px; height: 364px; padding: 13.750px 0 0 2px; border: 1px solid #c9c9c9; border-top-color: #aaa; font-size: 5.900px; color: #666; background: #fff; }
.corner { position: absolute; width: 3px; height: 3px; border: 1px solid #777; }
.c-tl { left: -1px; top: -1px; border-width: 1px 0 0 1px; }
.c-tr { right: -1px; top: -1px; border-width: 1px 1px 0 0; }
.c-br { right: -1px; bottom: -1px; border-width: 0 1px 1px 0; }
.grip { position: absolute; left: 223px; top: 1px; width: 7px; height: 5px; border-top: 1px solid #999; border-bottom: 1px solid #999; }
.v-tools { position: absolute; right: 3px; top: 1px; display: flex; gap: 4px; align-items: center; color: #777; font-size: 8px; line-height: 8px; }
.row { display: grid; grid-template-columns: 43px 48px 45px 50px 54px 57px 35px 16px 61px 34px; height: 9.500px; line-height: 9px; border-bottom: 1px solid #efefef; white-space: nowrap; }
.row span { text-align: right; padding-right: 2px; }
.row span.l { text-align: left; padding-left: 7px; }
.row span.reg { padding-left: 7.600px; }
.row.head { height: 10px; line-height: 9px; border-bottom: 1px solid #ddd; color: #777; }
.row.head .rsv { padding-right: 7px; }
.row.head span:nth-child(3) { padding-left: 7px; }
.row.total { height: 12px; line-height: 11px; font-weight: 700; color: #555; border-bottom: 0; }
.hscroll { position: absolute; left: 7px; right: 14px; bottom: 2px; height: 5px; display: flex; align-items: center; justify-content: space-between; font-size: 5px; color: #666; background: linear-gradient(#f2f2f2, #f2f2f2); }
.hscroll i { position: absolute; left: 181px; right: 8px; top: 0; bottom: 0; background: #cfcfcf; }
.vscroll { position: absolute; right: 1px; top: 18px; bottom: 10px; width: 6px; display: flex; flex-direction: column; justify-content: space-between; text-align: center; font-size: 6px; line-height: 6px; color: #666; }
.vscroll i { position: absolute; left: 0; right: 0; top: 9px; height: 23px; background: #d4d4d4; }
.tip { position: absolute; left: 195px; top: 333px; width: 18px; height: 11px; border: 1px solid #999; background: #fff; font-size: 5.500px; line-height: 9px; text-align: center; box-shadow: 1px 1px 1px #aaa; color: #555; }

/* slicer */
.v-slicer { left: 504px; top: 1px; width: 166px; color: #666; font-size: 6.300px; }
.sl-head { display: flex; justify-content: space-between; height: 12px; line-height: 8px; padding-top: 0; padding-right: 1px; }
.sl-mode { color: #888; display: flex; align-items: center; gap: 3px; height: 8px; }
.sl-dates { display: flex; gap: 4px; }
.sl-dates span { height: 15px; line-height: 14px; padding: 0 5px; border: 1px solid #f4f4f4; width: 44px; white-space: nowrap; }
.sl-track { position: relative; margin: 8px 0 0 1px; width: 163px; height: 2px; background: #666; }
.sl-track::before, .sl-track::after { content: ""; position: absolute; top: -4px; width: 2.500px; height: 10px; background: #666; border-radius: 1px; }
.sl-track::before { left: -1px; }
.sl-track::after { right: -1px; }

/* rates table */
.v-rates { left: 630px; top: 135px; width: 132px; font-size: 6.200px; color: #666; }
.r-row { display: grid; grid-template-columns: 40px 50px 30px; width: 122px; height: 9.460px; line-height: 9px; border-bottom: 1px solid #f0f0f0; white-space: nowrap; }
.r-row span:last-child { text-align: right; }
.r-head { height: 10px; border-bottom: 1px solid #ddd; color: #777; margin-bottom: 0; }
.r-total { font-weight: 700; color: #555; border-top: 1px solid #ccc; border-bottom: 0; height: 10px; line-height: 7px; }
.r-scroll { position: absolute; left: 124px; top: 1px; width: 6px; height: 138px; display: flex; flex-direction: column; justify-content: space-between; text-align: center; line-height: 6px; font-size: 6px; }
.r-scroll i { position: absolute; left: 1px; right: 1px; top: 9px; height: 34px; background: #d4d4d4; }

/* page tabs */
.pagetabs { height: 18px; background: #ececec; display: flex; color: #888; font-size: 6.200px; line-height: 18px; }
.pt-nav { width: 18px; display: flex; justify-content: space-around; color: #bbb; border-right: 1px solid #ddd; }
.pt { text-align: center; border-right: 1px solid #ddd; }
.w-dash { width: 53px; }
.w-map { width: 35px; }
.w-bad { width: 48px; }
.w-det { width: 39px; }
.w-p1 { width: 40px; }
.pt.active { background: #fff; border-bottom: 1px solid #f2c811; }
.pt-add { width: 20px; background: #f2c811; color: #7a6410; font-size: 10px; font-weight: 700; text-align: center; line-height: 17px; }

/* panes */
.viz, .fields { position: relative; background: #3d3d3d; color: #ddd; overflow: hidden; }
.viz { width: 94px; border-right: 1px solid #222; }
.fields { width: 94px; }
.pane-head { height: 25px; background: #252525; display: flex; justify-content: space-between; align-items: center; padding: 0 6px; font-size: 7px; font-weight: 600; color: #ddd; }
.chev { color: #aaa; font-size: 10px; font-weight: 400; }
.viz-grid { height: 64px; display: grid; grid-template-columns: repeat(6, 15px); grid-auto-rows: 12.400px; padding: 2px 0 0 2px; align-items: center; justify-items: center; }
.viz-grid svg { width: 9px; height: 9px; }
.viz-grid svg.sel { width: 12px; height: 12px; outline: 1px solid #d8b94a; outline-offset: -1px; padding: 1px; }
.r-ico { color: #6c93bd; font-size: 9px; font-weight: 700; line-height: 9px; }
.more { color: #aaa; font-size: 8px; line-height: 8px; }
.viz-tabs { height: 18px; background: #2a2a2a; display: flex; align-items: center; gap: 9.500px; padding-left: 10px; position: relative; }
.viz-tabs svg.on { position: relative; }
.viz-tabs::after { content: ""; position: absolute; left: 11px; bottom: -1px; width: 14px; height: 1px; background: #d8b94a; }
.pane-label { height: 19px; line-height: 17px; padding-left: 6px; font-size: 5.800px; color: #8a8a8a; }
.wells { height: 227px; padding: 0 5px 0 4px; display: flex; flex-direction: column; gap: 1.500px; }
.wells li { height: 11.500px; line-height: 11px; display: flex; justify-content: space-between; background: #2b2b2b; padding: 0 3px 0 2px; font-size: 5.900px; color: #ddd; white-space: nowrap; }
.wells i { color: #777; }
.filters-head { height: 19px; line-height: 19px; background: #2a2a2a; padding-left: 8px; font-size: 7px; font-weight: 600; color: #ddd; margin-top: 0; }
.pane-label.fl { height: 11px; line-height: 19px; }
.filters { padding: 8px 5px 0 4px; }
.filters li { background: #2b2b2b; padding-left: 5px; margin-bottom: 1.500px; height: 14px; line-height: 13px; font-size: 6px; white-space: nowrap; }
.filters li.two { height: 22px; line-height: 10.500px; }
.viz-scroll { position: absolute; right: 2px; top: 110px; width: 2px; height: 185px; background: #666; }

.search { margin: 5px 5px 0 6px; height: 15px; background: #1d1d1d; display: flex; align-items: center; gap: 3px; padding-left: 7px; font-size: 6px; color: #999; }
.flist { margin-top: 6px; padding-left: 3px; padding-right: 4px; }
.flist li { height: 10px; margin-bottom: 1.430px; background: #5a5a5a; display: flex; align-items: center; font-size: 6px; color: #e8e8e8; white-space: nowrap; line-height: 10px; }
.flist li.sel { outline: 1px solid #c9a93a; background: #4a4a4a; }
.cb { width: 6px; height: 6px; margin-left: 13px; background: #fff; position: relative; flex: none; }
.cb.on { background: #f2c811; }
.cb.on::after { content: ""; position: absolute; left: 1.500px; top: 0; width: 2.500px; height: 4.500px; border: solid #333; border-width: 0 1px 1px 0; transform: rotate(40deg); }
.fi { width: 11px; height: 6px; flex: none; padding-left: 2px; font-size: 5.500px; line-height: 6px; color: #aaa; position: relative; }
.fi.calc::after { content: ""; position: absolute; left: 2px; top: 0; width: 4px; height: 6px; background: #bbb; }
.fi.col::after { content: ""; position: absolute; left: 2px; top: 0; width: 6px; height: 6px; background: repeating-linear-gradient(90deg, #ccc 0 2px, #5a5a5a 2px 3px); }
.fields-scroll { position: absolute; right: 0; top: 138px; width: 2px; height: 213px; background: #777; }

/* status + taskbar */
.status { height: 11px; background: #333; color: #ddd; font-size: 5.600px; line-height: 11px; padding-left: 3px; font-weight: 600; }
.taskbar { height: 21px; background: #0c0c0c; display: flex; align-items: center; color: #ddd; }
.start { width: 25px; height: 21px; background: #222; display: flex; align-items: center; justify-content: center; }
.cortana { width: 179px; height: 21px; background: #333; display: flex; align-items: center; padding-left: 5px; color: #888; font-size: 7px; }
.cortana span { margin-left: 3px; }
.cortana .mic { margin-left: auto; margin-right: 8px; }
.apps { display: flex; }
.app-btn { width: 25.800px; height: 21px; display: flex; align-items: center; justify-content: center; }
.app-btn.ie { background: #a25a1c; }
.app-btn.run { border-bottom: 1px solid #6f9fc7; border-left: 2px solid #0c0c0c; border-right: 2px solid #0c0c0c; }
.tray { margin-left: auto; display: flex; align-items: center; gap: 8.500px; padding-right: 14px; }
.t-up { font-size: 8px; line-height: 8px; color: #ddd; margin-right: 3px; }
.clock { display: flex; flex-direction: column; align-items: center; font-size: 5.800px; line-height: 9px; width: 26px; color: #ddd; }
.kbd { margin: 0 2px; }

/* annotation drawn over the screenshot */
.annotation { position: absolute; left: 0; top: 0; width: 999px; height: 562px; pointer-events: none; }
.ann-shapes { position: absolute; left: 0; top: 0; filter: drop-shadow(1px 1px 1px rgba(90, 60, 60, .45)); }
.callout { position: absolute; left: 340px; top: 246px; width: 262px; color: #fde4e0; font-family: "Liberation Sans", Arial, sans-serif; font-size: 9.800px; line-height: 11.400px; text-align: center; }
.callout p + p { margin-top: 11.400px; }
```
